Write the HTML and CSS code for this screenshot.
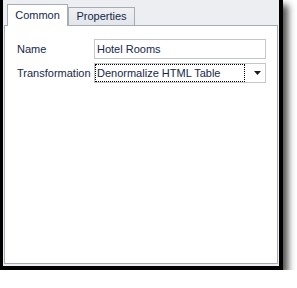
FILE: index.html
```html
<!DOCTYPE html>
<html lang="en">
<head>
    <meta charset="UTF-8">
    <meta name="viewport" content="width=device-width, initial-scale=1.0">
    <title>Transformation</title>
    <link rel="stylesheet" href="styles.css">
</head>
<body>
    <div class="window">
        <div class="tabs">
            <div class="tab active">Common</div>
            <div class="tab">Properties</div>
        </div>
        <div class="page">
            <div class="form">
                <label class="label">Name</label>
                <div class="field">Hotel Rooms</div>
                <label class="label">Transformation</label>
                <div class="field combo">
                    <span class="focus">Denormalize HTML Table</span>
                    <svg class="arrow" width="7" height="4" viewBox="0 0 7 4"><path d="M0 0H7L3.5 4Z" fill="#1b1b1b"/></svg>
                </div>
            </div>
        </div>
    </div>
</body>
</html>
```

FILE: styles.css
```css
body {
    margin: 0;
    background: #fff;
    font-family: "Liberation Sans", Arial, sans-serif;
    font-size: 11px;
    color: #15284a;
}

.window {
    width: 276px;
    height: 266px;
    border: 0 solid #000;
    border-width: 0 4px 4px 3px;
    background: #eceef2;
    box-shadow: 5px 5px 7px rgba(0, 0, 0, 0.7);
    display: flex;
    flex-direction: column;
}

.tabs {
    height: 25px;
    display: flex;
    align-items: flex-end;
    padding-left: 4px;
}

.tab {
    box-sizing: border-box;
    height: 18px;
    width: 67px;
    border: 1px solid #a8acb5;
    border-bottom: none;
    background: linear-gradient(#eef0f3, #e2e5ea);
    text-align: center;
    line-height: 17px;
}

.tab.active {
    width: 61px;
    height: 22px;
    line-height: 20px;
    background: #fff;
    margin-bottom: -1px;
    position: relative;
    z-index: 1;
}

.page {
    flex: 1;
    margin: 0 1px 2px 1px;
    border: 1px solid #a5aab4;
    background: #fff;
    padding: 13px 11px 0 12px;
}

.form {
    display: grid;
    grid-template-columns: 77px 1fr;
    row-gap: 4px;
    align-items: center;
}

.field {
    box-sizing: border-box;
    height: 20px;
    border: 1px solid #c3c6cc;
    padding: 0 2px;
    line-height: 18px;
    white-space: nowrap;
}

.combo {
    display: flex;
    align-items: center;
    padding: 0 4px 0 0;
}

.focus {
    flex: 1;
    height: 16px;
    line-height: 16px;
    padding-left: 1px;
    border: 1px dotted #000;
    margin-right: 9px;
}

.arrow {
    display: block;
}
```
